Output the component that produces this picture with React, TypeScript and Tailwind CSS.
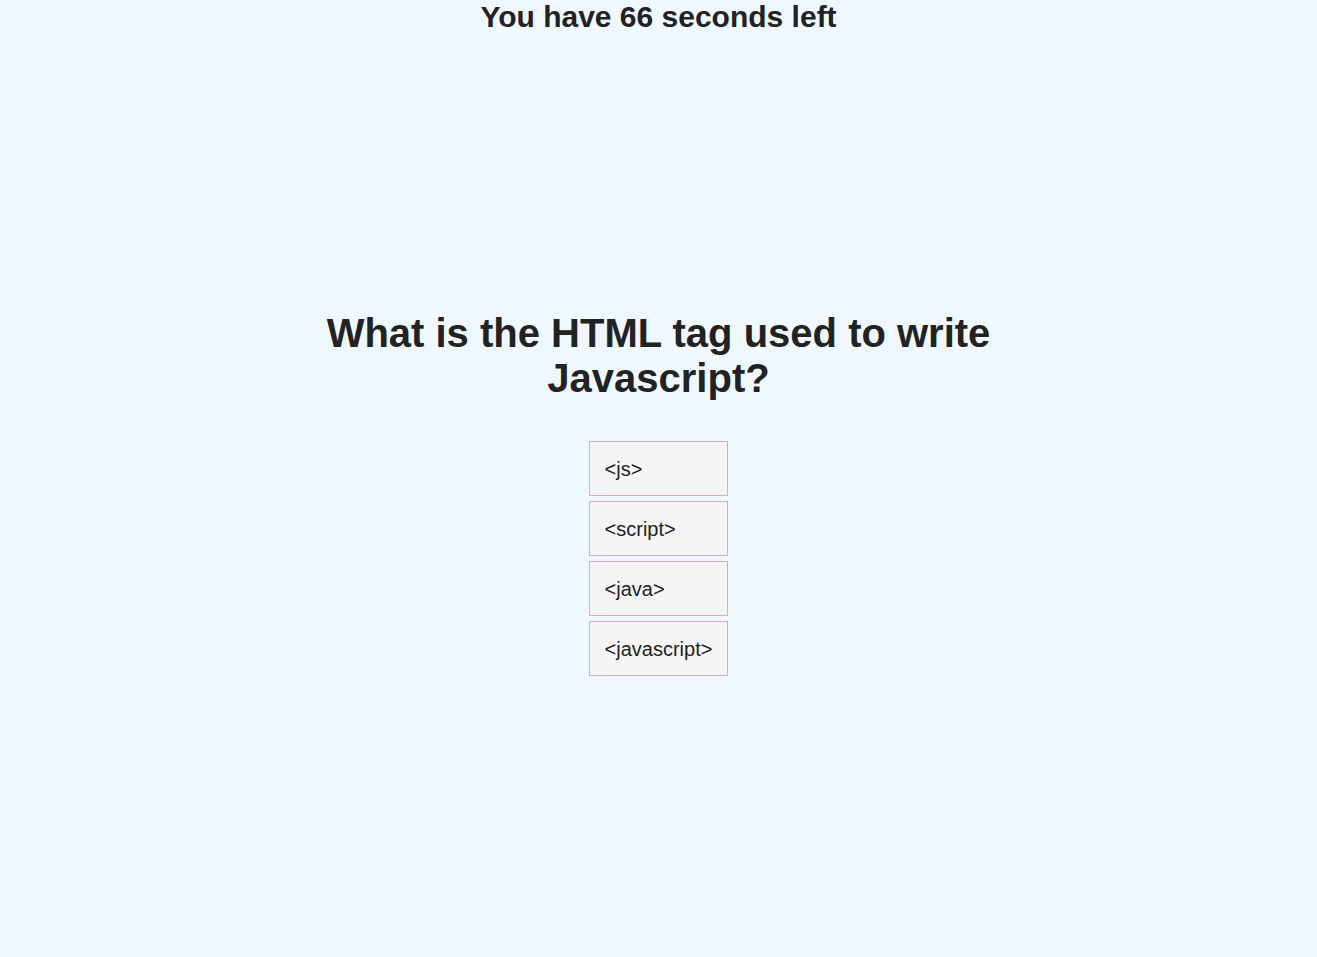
const answers = ["<js>", "<script>", "<java>", "<javascript>"];

export default function App() {
    return (
        <div className="min-h-screen bg-[#f0f8ff] text-[#222] font-['Liberation_Sans',Arial,sans-serif]">
            <h2 className="text-center text-[30px] font-bold leading-[34px]">You have 66 seconds left</h2>
            <div className="mx-auto mt-[277px] w-[700px]">
                <h1 className="text-center text-[40px] font-bold leading-[45px]">
                    What is the HTML tag used to write Javascript?
                </h1>
                <div className="mt-[40px] flex flex-col items-center">
                    <div className="flex flex-col gap-[5px]">
                        {answers.map((a) => (
                            <button
                                key={a}
                                className="h-[55px] border border-[#dca4dc] bg-[#f5f5f5] px-[15px] text-left text-[20px]"
                            >
                                {a}
                            </button>
                        ))}
                    </div>
                </div>
            </div>
        </div>
    );
}
